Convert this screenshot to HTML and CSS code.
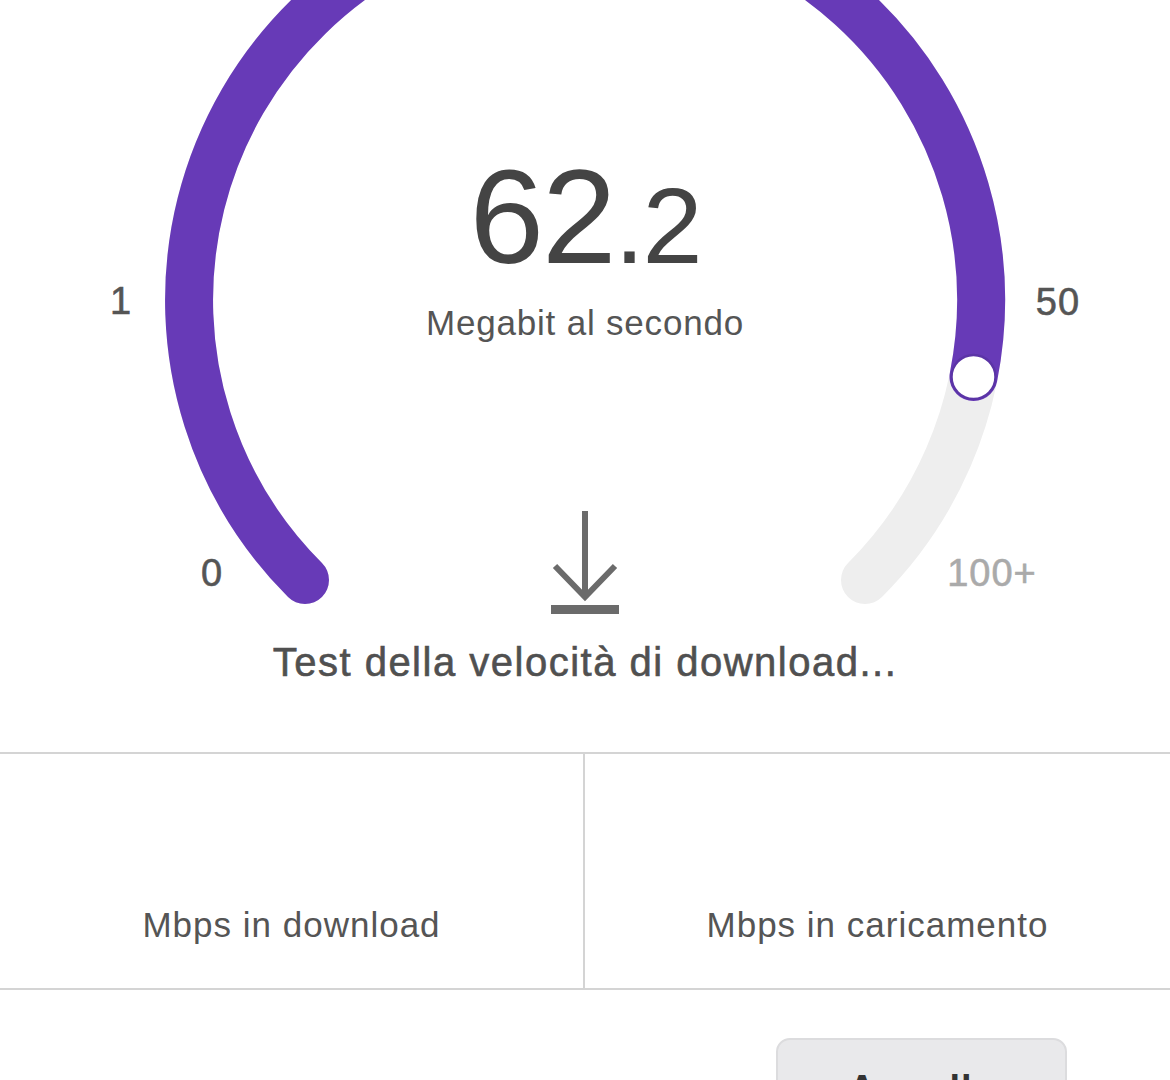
FILE: index.html
```html
<!DOCTYPE html>
<html lang="it">
<head>
    <meta charset="UTF-8">
    <meta name="viewport" content="width=device-width, initial-scale=1.0">
    <title>Test della velocità</title>
    <link rel="stylesheet" href="styles.css">
</head>
<body>

    <main class="speedtest">
        <section class="gauge">
            <!-- dial: centre 585,300 radius 396, 270 degree sweep -->
            <svg class="dial" width="1170" height="752" viewBox="0 0 1170 752">
                <path class="track" d="M 305 580 A 396 396 0 1 1 865 580" />
                <path class="fill" d="M 305 580 A 396 396 0 1 1 973.5 377" />
                <circle class="knob" cx="973.5" cy="377" r="22" />
            </svg>

            <span class="tick tick-0">0</span>
            <span class="tick tick-1">1</span>
            <span class="tick tick-50">50</span>
            <span class="tick tick-max">100+</span>

            <div class="reading">
                <div class="value">62<span class="decimal">.2</span></div>
                <div class="unit">Megabit al secondo</div>
            </div>

            <div class="status">
                <svg class="status-icon" width="80" height="104" viewBox="0 0 80 104">
                    <line x1="40" y1="0" x2="40" y2="86" />
                    <polyline points="10,55 40,86 70,55" />
                    <rect x="6" y="94" width="68" height="9" />
                </svg>
                <p class="status-text">Test della velocità di download...</p>
            </div>
        </section>

        <section class="results">
            <div class="result">
                <span class="result-label">Mbps in download</span>
            </div>
            <div class="result">
                <span class="result-label">Mbps in caricamento</span>
            </div>
        </section>

        <div class="actions">
            <button class="cancel">Annulla</button>
        </div>
    </main>

</body>
</html>
```

FILE: styles.css
```css
body {
    margin: 0;
    background-color: #fff;
    font-family: "Liberation Sans", Arial, sans-serif;
    color: #555;
    overflow: hidden;
}
.speedtest {
    width: 1170px;
}
.gauge {
    position: relative;
    height: 752px;
    padding-top: 150px;
    box-sizing: border-box;
    text-align: center;
}
.dial {
    position: absolute;
    top: 0;
    left: 0;
}
.track,
.fill {
    fill: none;
    stroke-width: 48;
    stroke-linecap: round;
}
.track {
    stroke: #eeeeee;
}
.fill {
    stroke: #673ab7;
}
.knob {
    fill: #fff;
    stroke: #5b34a6;
    stroke-width: 2.5;
}
.tick {
    position: absolute;
    font-size: 38px;
    line-height: 1;
    letter-spacing: 1px;
    color: #555;
    -webkit-text-stroke: 0.6px #555;
    transform: translate(-50%, -50%);
}
.tick-0 { left: 212px; top: 573px; }
.tick-1 { left: 121px; top: 301px; }
.tick-50 { left: 1058px; top: 302px; }
.tick-max {
    left: 992px;
    top: 573px;
    color: #aaa;
    -webkit-text-stroke: 0.6px #aaa;
}

.reading {
    position: relative;
}
.value {
    font-size: 134px;
    line-height: 1;
    color: #444;
    letter-spacing: -2px;
}
.decimal {
    font-size: 108px;
}
.unit {
    margin-top: 18px;
    font-size: 35px;
    line-height: 42px;
    letter-spacing: 0.8px;
    color: #555;
}
.status {
    position: relative;
    margin-top: 167px;
}
.status-icon {
    display: block;
    margin: 0 auto;
}
.status-icon line,
.status-icon polyline {
    fill: none;
    stroke: #6b6b6b;
    stroke-width: 6;
}
.status-icon rect {
    fill: #6b6b6b;
}
.status-text {
    margin: 23px 0 0;
    font-size: 40px;
    line-height: 48px;
    letter-spacing: 1.5px;
    color: #505050;
    -webkit-text-stroke: 0.6px #505050;
}
.results {
    display: grid;
    grid-template-columns: 585px 1fr;
    height: 238px;
    box-sizing: border-box;
    border-top: 2px solid #d4d4d4;
    border-bottom: 2px solid #d4d4d4;
}
.result {
    display: flex;
    align-items: flex-end;
    justify-content: center;
    padding-bottom: 42px;
}
.result:first-child {
    border-right: 2px solid #d4d4d4;
}
.result-label {
    font-size: 35px;
    line-height: 42px;
    letter-spacing: 1px;
    color: #555;
}
.actions {
    display: flex;
    justify-content: flex-end;
    padding: 48px 103px 0 0;
}
.cancel {
    width: 291px;
    height: 90px;
    padding-top: 14px;
    border: 2px solid #dcdcde;
    border-radius: 14px;
    background-color: #e9e9eb;
    font-family: "Liberation Sans", Arial, sans-serif;
    font-size: 38px;
    font-weight: bold;
    letter-spacing: 1px;
    color: #333;
}
```
